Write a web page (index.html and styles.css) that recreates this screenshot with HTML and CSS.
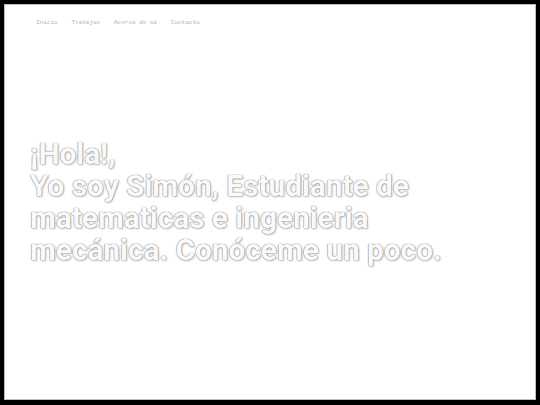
FILE: index.html
```html
<!DOCTYPE html>
<html lang="es">
<head>
<meta charset="utf-8">
<title>Simón</title>
<link rel="stylesheet" href="styles.css">
</head>
<body>
<div class="page">
  <nav class="nav">
    <a class="nav-item" href="#">Inicio</a>
    <a class="nav-item" href="#">Trabajos</a>
    <a class="nav-item" href="#">Acerca de mi</a>
    <a class="nav-item" href="#">Contacto</a>
  </nav>
  <h1 class="hero">¡Hola!,<br>Yo soy Simón, Estudiante de<br>matematicas e ingenieria<br>mecánica. Conóceme un poco.</h1>
</div>
</body>
</html>
```
FILE: styles.css
```css
html, body {
  margin: 0;
  padding: 0;
  background: #000;
}
body {
  padding: 4px 4px 5px 4px;
  height: 405px;
  box-sizing: border-box;
}
.page {
  background: #fff;
  border: 1px solid #bdbdbd;
  height: 396px;
  box-sizing: border-box;
  padding: 12px 0 0 31px;
}
.nav {
  display: flex;
  gap: 13.8px;
  height: 10px;
  align-items: center;
}
.nav-item {
  font-family: "Liberation Mono", "DejaVu Sans Mono", monospace;
  font-size: 6px;
  color: #b5b5b5;
  text-decoration: none;
}
.hero {
  margin: 111px 0 0 -6px;
  font-family: Roboto, "Liberation Sans", sans-serif;
  font-weight: 700;
  font-size: 29.8px;
  line-height: 32px;
  color: #fafafa;
  text-shadow: 0 0 1px #777, 0 0 1px #888, 1px 1px 2px #c4c4c4;
}
```
